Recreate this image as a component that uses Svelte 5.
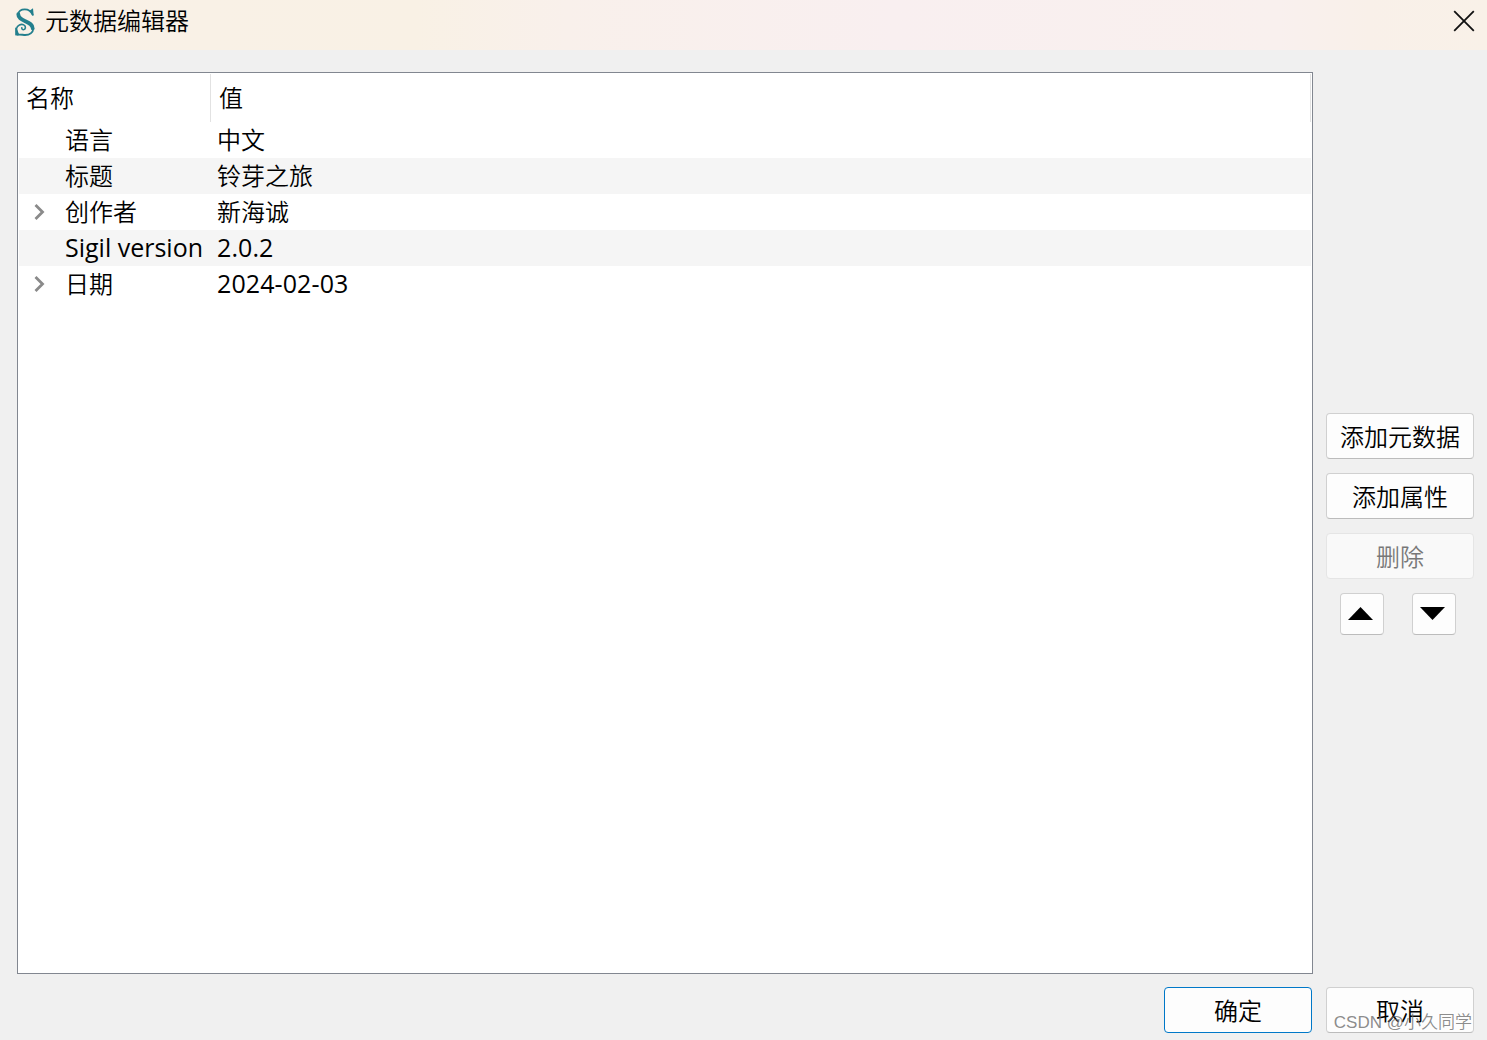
<script>
  const rows = [
    { name: "语言", value: "中文" },
    { name: "标题", value: "铃芽之旅" },
    { name: "创作者", value: "新海诚", expandable: true },
    { name: "Sigil version", value: "2.0.2", latinName: true, latinValue: true },
    { name: "日期", value: "2024-02-03", expandable: true, latinValue: true },
  ];
</script>

<div class="dialog">
  <header class="titlebar">
    <svg class="logo" width="22" height="30" viewBox="0 0 22 30">
      <g fill="none" stroke="#237f8d" stroke-linecap="round">
        <path d="M18.6 7.6C17 4 14.2 2.3 10.8 2.3C7.2 2.3 4.6 4.4 4.1 7.2" stroke-width="1.8" />
        <path d="M4.3 7.2C4.2 11 7.6 12.4 11.4 14.2C15.8 16.2 18.8 17.8 18.7 21.4" stroke-width="3.8" />
        <path d="M19.3 21.4C19.1 25.6 15.6 28 11.2 28C8.6 28 6.4 27 3 27.8" stroke-width="1.8" />
        <path d="M3.8 27C1.4 23.6 2.2 19.2 5.4 17.9C8.6 16.6 11.8 18.2 11.4 20.9C11 23.4 7.6 23.2 7.8 20.9" stroke-width="1.6" />
      </g>
      <path d="M19 1.2L19.7 8.6H18.3L15.8 3.4Z" fill="#237f8d" />
      <path d="M1.2 20.6L2.6 21L5 27.2L1.2 28.6Z" fill="#237f8d" />
    </svg>
    <h1>元数据编辑器</h1>
    <button class="close" aria-label="关闭">
      <svg width="22" height="22" viewBox="0 0 22 22">
        <path d="M1.2 1.2L20.8 20.8M20.8 1.2L1.2 20.8" stroke="#111" stroke-width="1.8" />
      </svg>
    </button>
  </header>

  <main>
    <div class="tree">
      <div class="tree-header">
        <div class="name-head">名称</div>
        <div class="value-head">值</div>
      </div>
      {#each rows as row (row.name)}
        <div class="row">
          <div class="arrow">
            {#if row.expandable}
              <svg width="12" height="18" viewBox="0 0 12 18">
                <path d="M1.5 2L8.5 9L1.5 16" fill="none" stroke="#8a8a8a" stroke-width="2.8" />
              </svg>
            {/if}
          </div>
          <div class="name" class:latin={row.latinName}>{row.name}</div>
          <div class="value" class:latin={row.latinValue}>{row.value}</div>
        </div>
      {/each}
    </div>

    <div class="side">
      <button class="btn">添加元数据</button>
      <button class="btn">添加属性</button>
      <button class="btn" disabled>删除</button>
      <div class="move">
        <button class="btn small" aria-label="上移">
          <svg width="25" height="13" viewBox="0 0 25 13"><path d="M0 13L12.5 0L25 13Z" /></svg>
        </button>
        <button class="btn small" aria-label="下移">
          <svg width="25" height="13" viewBox="0 0 25 13"><path d="M0 0H25L12.5 13Z" /></svg>
        </button>
      </div>
    </div>
  </main>

  <footer>
    <button class="btn primary">确定</button>
    <button class="btn">取消</button>
    <span class="watermark">CSDN @小久同学</span>
  </footer>
</div>

<style>
  :global(body) {
    margin: 0;
    overflow: hidden;
  }

  .dialog {
    display: flex;
    flex-direction: column;
    box-sizing: border-box;
    width: 1487px;
    height: 1040px;
    background: #f0f0f0;
    color: #000;
    font-family: "Noto Sans CJK SC", sans-serif;
    font-size: 24px;
    font-weight: 350;
    line-height: 36px;
  }

  .titlebar {
    display: flex;
    align-items: flex-start;
    box-sizing: border-box;
    height: 50px;
    padding: 0 12px 0 14px;
    background: linear-gradient(90deg, #f9f1e7 0%, #f9f1e5 28%, #f9f0eb 38%, #f9eff0 60%, #f9f0ee 86%, #f9f0e9 92%, #f9f1e8 100%);
  }

  .logo {
    margin: 7px 9px 0 0;
  }

  h1 {
    flex: 1;
    margin: 2px 0 0;
    font-size: 24px;
    font-weight: 350;
    line-height: 36px;
  }

  .close {
    margin-top: 10px;
    padding: 0;
    border: 0;
    background: none;
    line-height: 0;
  }

  main {
    display: flex;
    gap: 13px;
    padding: 22px 13px 0 17px;
  }

  .tree {
    box-sizing: border-box;
    width: 1296px;
    height: 902px;
    padding: 1px;
    border: 1px solid #828790;
    background: #fff;
  }

  .tree-header {
    display: flex;
    height: 48px;
    line-height: 46px;
  }

  .name-head {
    box-sizing: border-box;
    width: 192px;
    padding-left: 7px;
    border-right: 1px solid #e2e2e2;
  }

  .value-head {
    box-sizing: border-box;
    width: 1100px;
    padding-left: 8px;
    border-right: 1px solid #e2e2e2;
  }

  .row {
    display: flex;
    height: 36px;
    line-height: 34px;
    white-space: nowrap;
  }

  .row:nth-child(odd) {
    background: #f5f5f5;
  }

  .arrow {
    display: flex;
    align-items: center;
    box-sizing: border-box;
    width: 46px;
    padding-left: 15px;
  }

  .name {
    width: 152px;
  }

  .latin {
    font-family: "Open Sans", sans-serif;
    font-size: 25px;
    font-weight: 400;
    line-height: 34px;
  }

  .value.latin {
    letter-spacing: 0.1px;
  }

  .side {
    display: flex;
    flex-direction: column;
    gap: 14px;
    padding-top: 341px;
  }

  .btn {
    display: flex;
    align-items: center;
    justify-content: center;
    box-sizing: border-box;
    width: 148px;
    height: 46px;
    padding: 0;
    border: 1px solid #d0d0d0;
    border-bottom-color: #bcbcbc;
    border-radius: 4px;
    background: #fdfdfd;
    color: #000;
    font: inherit;
  }

  .btn:disabled {
    border-color: #e5e5e5;
    background: #f9f9f9;
    color: #787878;
  }

  .btn.primary {
    border-color: #0078c8;
  }

  .move {
    display: flex;
    gap: 28px;
    padding-left: 14px;
  }

  .btn.small {
    width: 44px;
    height: 42px;
    padding: 0 3px 1px 0;
  }

  footer {
    position: relative;
    display: flex;
    justify-content: flex-end;
    gap: 14px;
    padding: 13px 13px 0 0;
  }

  .watermark {
    position: absolute;
    right: 15px;
    bottom: -8px;
    color: rgba(110, 110, 110, 0.8);
    font-family: "Liberation Sans", "Noto Sans CJK SC", sans-serif;
    font-size: 17px;
    line-height: 36px;
    white-space: nowrap;
  }
</style>
